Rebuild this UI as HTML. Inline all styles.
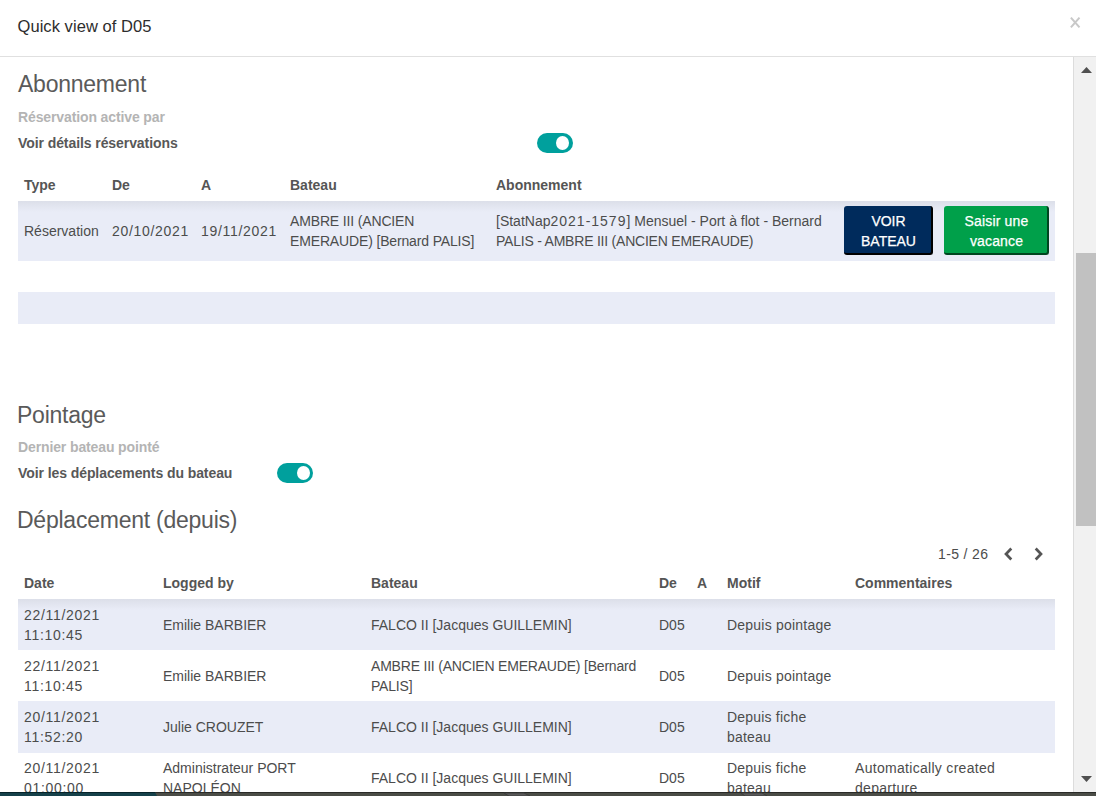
<!DOCTYPE html>
<html><head><meta charset="utf-8">
<style>
*{box-sizing:border-box;margin:0;padding:0}
html,body{width:1096px;height:796px;overflow:hidden;background:#fff;font-family:"Liberation Sans",sans-serif;color:#4c4c4c;font-size:14px;line-height:20px}
.abs{position:absolute;white-space:nowrap}
#hdr{position:absolute;left:0;top:0;width:1096px;height:57px;border-bottom:1px solid #e0e0e0}
#title{left:17.5px;top:14px;font-size:16.5px;line-height:24px;color:#2d2d2d;letter-spacing:0.06px}
#close{left:1068px;top:14px;width:14px;height:16px}
#sb{position:absolute;left:1073px;top:57px;width:23px;height:735px;background:#f1f1f1;border-left:1px solid #dcdcdc}
#thumb{position:absolute;left:1076px;top:253px;width:20px;height:273px;background:#c1c1c1}
.h2{font-size:23px;line-height:30px;color:#5a5a5a;letter-spacing:-0.24px}
.lbl{font-weight:bold;color:#585858;letter-spacing:-0.08px}
.grey{font-weight:bold;color:#b4b4b4;letter-spacing:-0.12px}
.toggle{position:absolute;width:36px;height:20px;border-radius:10px;background:#00a09d}
.toggle i{position:absolute;left:18.6px;top:2.8px;width:13.4px;height:14.2px;border-radius:50%;background:#fff}
.dt{letter-spacing:0.7px}
.th{font-weight:bold;color:#555}
.row{position:absolute;left:18px;width:1037px;background:#e9ecf7}
.grad{background:linear-gradient(#dcdfe9,#e9ecf7 11px)}
.rowtop{position:absolute;left:18px;width:1037px;height:1px;background:#dadde7}
.btn{position:absolute;text-align:center;color:#fff;border-radius:3px;line-height:20px;padding-left:2px;-webkit-text-stroke:0.25px #fff}
#bottom{position:absolute;left:0;top:792px;width:1096px;height:4px;display:block}
</style></head><body>
<div id="hdr"></div>
<div class="abs" id="title">Quick view of D05</div>
<svg class="abs" id="close" viewBox="0 0 14 16"><path d="M2.9 3.6 L11.5 13.4 M11.5 3.6 L2.9 13.4" stroke="#c8c8c8" stroke-width="2"/></svg>

<div class="abs h2" style="left:18px;top:69px">Abonnement</div>
<div class="abs grey" style="left:18px;top:107px">Réservation active par</div>
<div class="abs lbl" style="left:18px;top:133px">Voir détails réservations</div>
<div class="toggle" style="left:537px;top:133px"><i></i></div>

<div class="abs th" style="left:24px;top:175px">Type</div>
<div class="abs th" style="left:112px;top:175px">De</div>
<div class="abs th" style="left:201px;top:175px">A</div>
<div class="abs th" style="left:290px;top:175px">Bateau</div>
<div class="abs th" style="left:496px;top:175px">Abonnement</div>

<div class="row grad" style="top:201px;height:60px"></div>
<div class="abs" style="left:24px;top:221px">Réservation</div>
<div class="abs dt" style="left:112px;top:221px">20/10/2021</div>
<div class="abs dt" style="left:201px;top:221px">19/11/2021</div>
<div class="abs" style="left:290px;top:211px;letter-spacing:-0.15px">AMBRE III (ANCIEN<br>EMERAUDE) [Bernard PALIS]</div>
<div class="abs" style="left:496px;top:211px">[StatNap<span style="letter-spacing:1px">2021-1579</span>] Mensuel - Port à flot - Bernard<br><span style="letter-spacing:-0.22px">PALIS - AMBRE III (ANCIEN EMERAUDE)</span></div>
<div class="btn" style="left:844px;top:206px;width:89px;height:49px;background:#002b5c;border-right:2px solid #000;border-bottom:2px solid #000;padding-top:5px">VOIR<br>BATEAU</div>
<div class="btn" style="left:944px;top:206px;width:105px;height:49px;background:#00a04a;border-right:2px solid #00461f;border-bottom:2px solid #00461f;padding-top:5px;letter-spacing:0.15px">Saisir une<br>vacance</div>

<div class="row" style="top:292px;height:32px"></div>

<div class="abs h2" style="left:17px;top:400px">Pointage</div>
<div class="abs grey" style="left:18px;top:437px">Dernier bateau pointé</div>
<div class="abs lbl" style="left:18px;top:463px">Voir les déplacements du bateau</div>
<div class="toggle" style="left:277px;top:463px"><i style="left:19.6px"></i></div>

<div class="abs h2" style="left:17px;top:505px">Déplacement (depuis)</div>

<div class="abs" style="left:938px;top:544px;letter-spacing:0.35px">1-5 / 26</div>
<svg class="abs" style="left:1003px;top:546px" width="11" height="16" viewBox="0 0 11 16"><path d="M8.3 2.5 L3 8 L8.3 13.5" fill="none" stroke="#555" stroke-width="2.7"/></svg>
<svg class="abs" style="left:1033px;top:546px" width="11" height="16" viewBox="0 0 11 16"><path d="M2.7 2.5 L8 8 L2.7 13.5" fill="none" stroke="#555" stroke-width="2.7"/></svg>

<div class="abs th" style="left:24px;top:573px">Date</div>
<div class="abs th" style="left:163px;top:573px">Logged by</div>
<div class="abs th" style="left:371px;top:573px">Bateau</div>
<div class="abs th" style="left:659px;top:573px">De</div>
<div class="abs th" style="left:697px;top:573px">A</div>
<div class="abs th" style="left:727px;top:573px">Motif</div>
<div class="abs th" style="left:855px;top:573px">Commentaires</div>

<div class="row grad" style="top:599px;height:51px"></div>
<div class="row" style="top:701px;height:52px"></div>

<div class="abs dt" style="left:24px;top:605px">22/11/2021<br>11:10:45</div>
<div class="abs" style="left:163px;top:615px">Emilie BARBIER</div>
<div class="abs" style="left:371px;top:615px">FALCO II [Jacques GUILLEMIN]</div>
<div class="abs" style="left:659px;top:615px">D05</div>
<div class="abs" style="left:727px;top:615px;letter-spacing:0.22px">Depuis pointage</div>

<div class="abs dt" style="left:24px;top:656px">22/11/2021<br>11:10:45</div>
<div class="abs" style="left:163px;top:666px">Emilie BARBIER</div>
<div class="abs" style="left:371px;top:656px;letter-spacing:-0.2px">AMBRE III (ANCIEN EMERAUDE) [Bernard<br>PALIS]</div>
<div class="abs" style="left:659px;top:666px">D05</div>
<div class="abs" style="left:727px;top:666px;letter-spacing:0.22px">Depuis pointage</div>

<div class="abs dt" style="left:24px;top:707px">20/11/2021<br>11:52:20</div>
<div class="abs" style="left:163px;top:717px">Julie CROUZET</div>
<div class="abs" style="left:371px;top:717px">FALCO II [Jacques GUILLEMIN]</div>
<div class="abs" style="left:659px;top:717px">D05</div>
<div class="abs" style="left:727px;top:707px;letter-spacing:0.2px">Depuis fiche<br>bateau</div>

<div class="abs dt" style="left:24px;top:758px">20/11/2021<br>01:00:00</div>
<div class="abs" style="left:163px;top:758px">Administrateur PORT<br>NAPOLÉON</div>
<div class="abs" style="left:371px;top:768px">FALCO II [Jacques GUILLEMIN]</div>
<div class="abs" style="left:659px;top:768px">D05</div>
<div class="abs" style="left:727px;top:758px;letter-spacing:0.2px">Depuis fiche<br>bateau</div>
<div class="abs" style="left:855px;top:758px;letter-spacing:0.3px">Automatically created<br>departure</div>

<div id="sb"></div>
<div id="thumb"></div>
<svg class="abs" style="left:1080px;top:66px" width="13" height="8" viewBox="0 0 13 8"><path d="M1 7 L6.5 1 L12 7 Z" fill="#505050"/></svg>
<svg class="abs" style="left:1080px;top:775px" width="13" height="8" viewBox="0 0 13 8"><path d="M1 1 L6.5 7 L12 1 Z" fill="#505050"/></svg>
<svg id="bottom" width="1096" height="4" viewBox="0 0 1096 4"><rect x="0" y="0" width="1096" height="4" fill="#4a4c46"/><rect x="0" y="0" width="1096" height="1" fill="#2a2b28"/><path d="M0 0 H155 L157 4 H0 Z" fill="#15414a"/><rect x="0" y="0" width="155" height="1" fill="#062329"/><path d="M504 1 H524 L530 4 H509 Z" fill="#595959" stroke="#3a3a3a" stroke-width="0.8"/><path d="M741 1 H762 L767 4 H745 Z" fill="#595959" stroke="#3a3a3a" stroke-width="0.8"/></svg>
</body></html>
